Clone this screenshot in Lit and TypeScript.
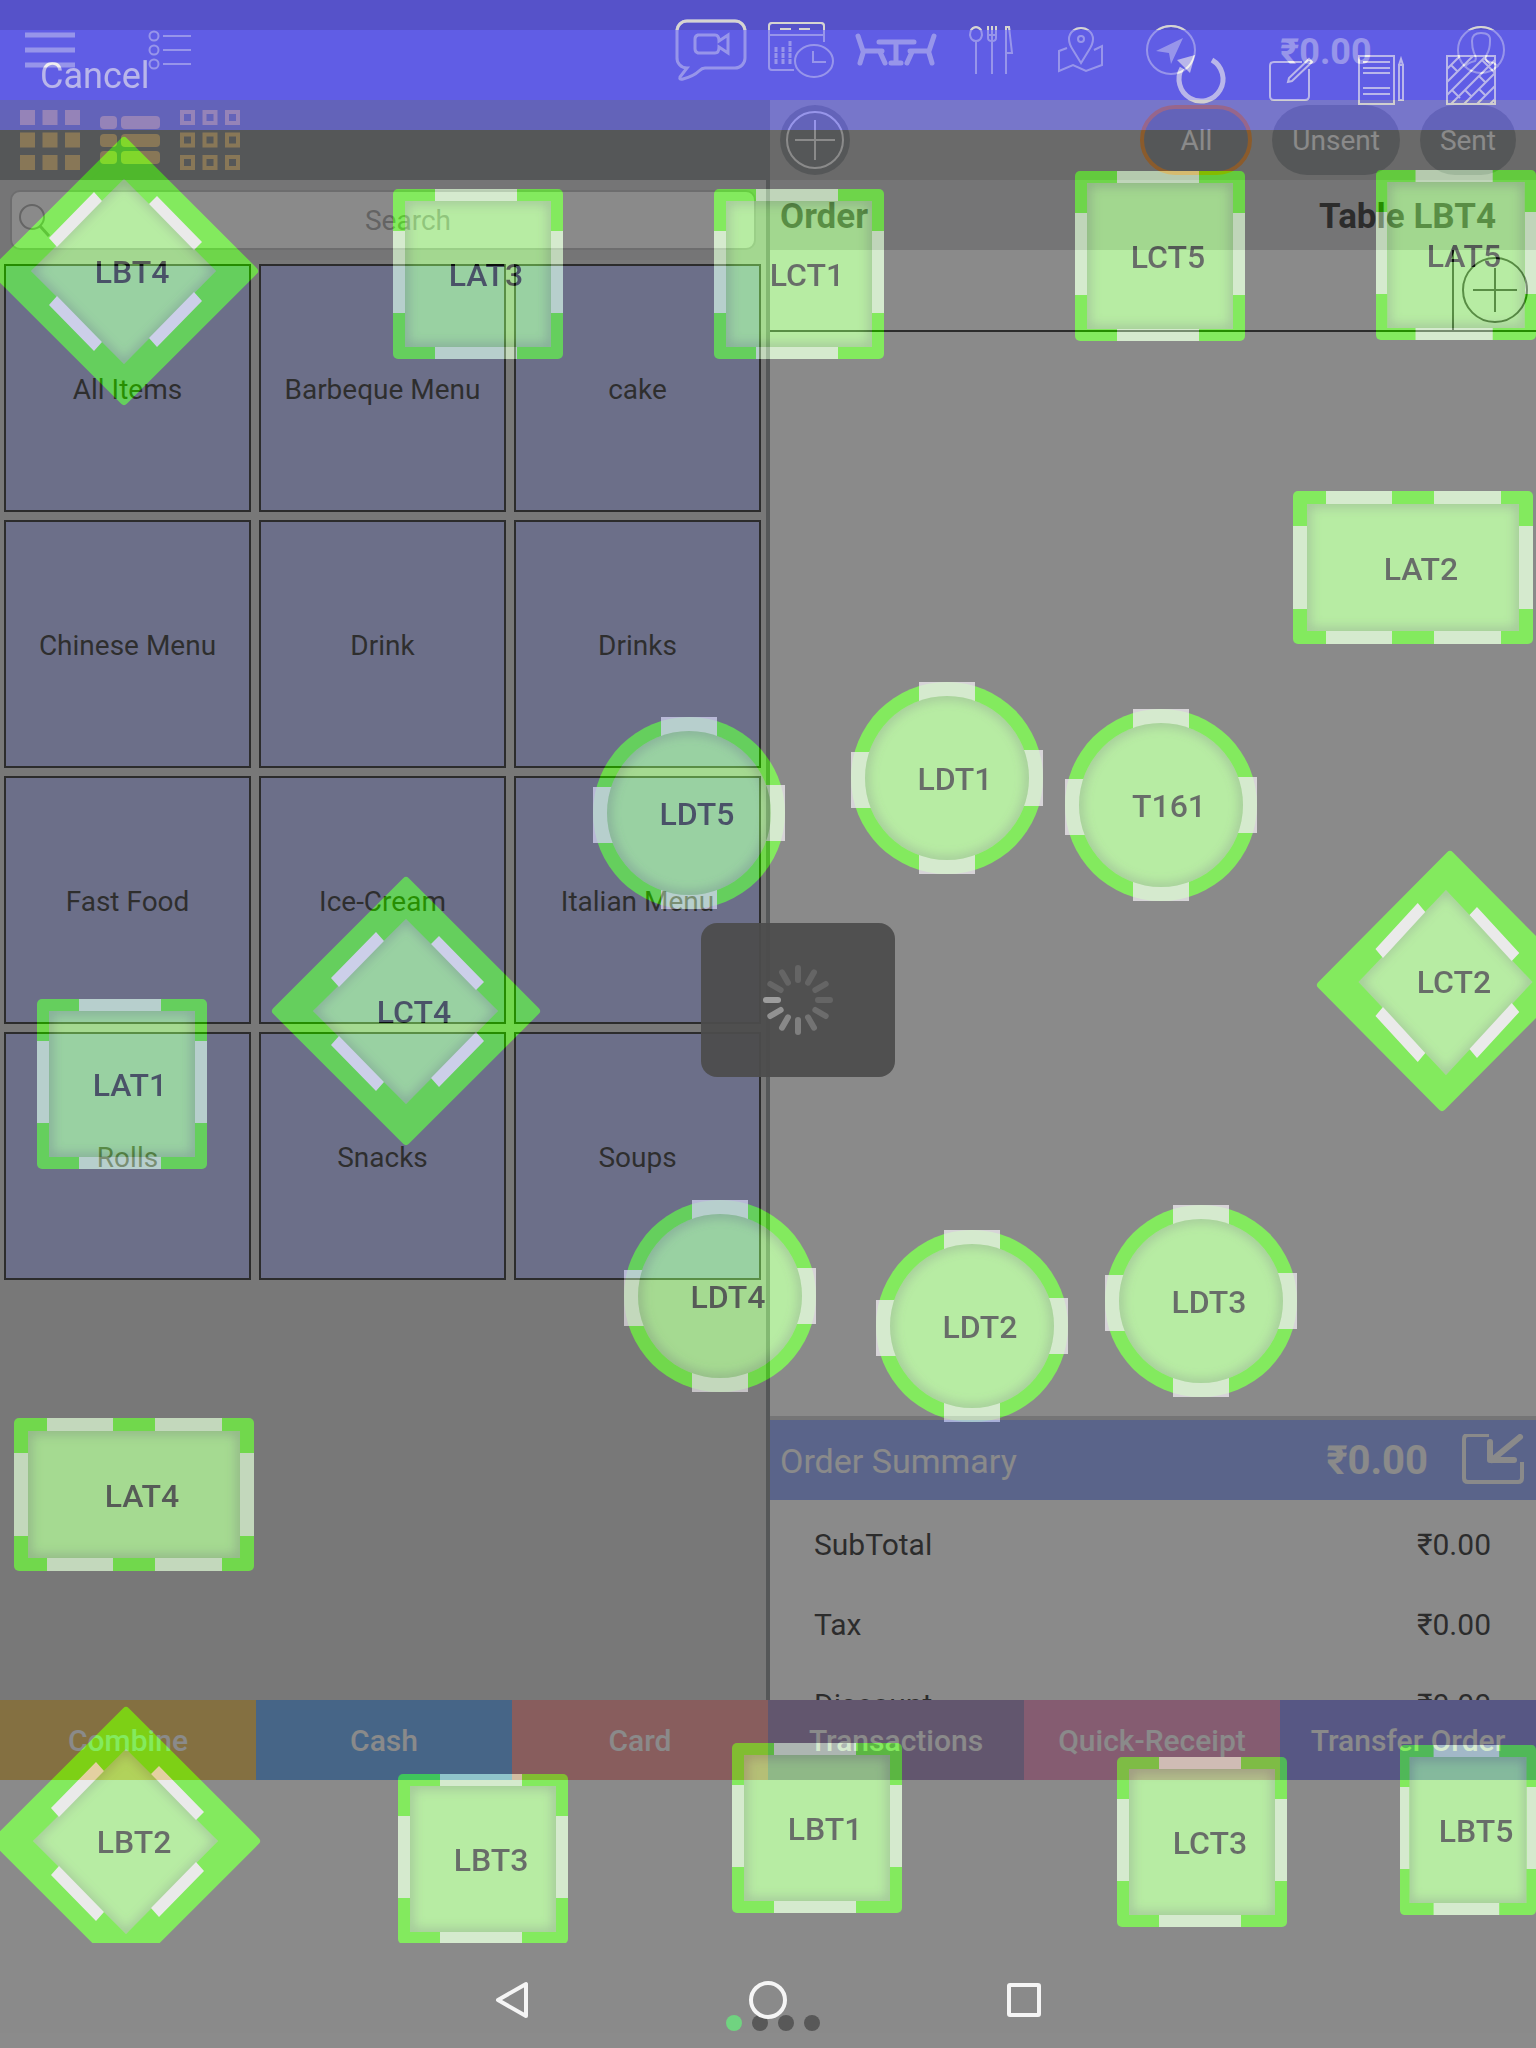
import { LitElement, html, css, svg, nothing } from "lit";
import { customElement, property } from "lit/decorators.js";
import { styleMap } from "lit/directives/style-map.js";

type Kind = "square" | "wide" | "round" | "diamond" | "kite";
interface Spot { label: string; kind: Kind; x: number; y: number; w: number; h: number; }

const SPOTS: Spot[] = [
  { label: "LBT4", kind: "diamond", x: -10, y: 137, w: 268, h: 268 },
  { label: "LAT3", kind: "square", x: 393, y: 189, w: 170, h: 170 },
  { label: "LCT1", kind: "square", x: 714, y: 189, w: 170, h: 170 },
  { label: "LCT5", kind: "square", x: 1075, y: 171, w: 170, h: 170 },
  { label: "LAT5", kind: "square", x: 1376, y: 170, w: 160, h: 170 },
  { label: "LAT2", kind: "wide", x: 1293, y: 491, w: 240, h: 153 },
  { label: "LDT1", kind: "round", x: 851, y: 682, w: 192, h: 192 },
  { label: "T161", kind: "round", x: 1065, y: 709, w: 192, h: 192 },
  { label: "LDT5", kind: "round", x: 593, y: 717, w: 192, h: 192 },
  { label: "LCT2", kind: "kite", x: 1317, y: 851, w: 258, h: 260 },
  { label: "LCT4", kind: "diamond", x: 272, y: 877, w: 268, h: 268 },
  { label: "LAT1", kind: "square", x: 37, y: 999, w: 170, h: 170 },
  { label: "LDT4", kind: "round", x: 624, y: 1200, w: 192, h: 192 },
  { label: "LDT2", kind: "round", x: 876, y: 1230, w: 192, h: 192 },
  { label: "LDT3", kind: "round", x: 1105, y: 1205, w: 192, h: 192 },
  { label: "LAT4", kind: "wide", x: 14, y: 1418, w: 240, h: 153 },
  { label: "LBT2", kind: "diamond", x: -8, y: 1707, w: 268, h: 268 },
  { label: "LBT3", kind: "square", x: 398, y: 1774, w: 170, h: 170 },
  { label: "LBT1", kind: "square", x: 732, y: 1743, w: 170, h: 170 },
  { label: "LCT3", kind: "square", x: 1117, y: 1757, w: 170, h: 170 },
  { label: "LBT5", kind: "square", x: 1400, y: 1745, w: 136, h: 170 },
];

const CATEGORIES = [
  "All Items", "Barbeque Menu", "cake", "Chinese Menu", "Drink", "Drinks",
  "Fast Food", "Ice-Cream", "Italian Menu", "Rolls", "Snacks", "Soups",
];

const ACTIONS = [
  ["Combine", "combine"], ["Cash", "cash"], ["Card", "card"],
  ["Transactions", "transactions"], ["Quick-Receipt", "receipt"], ["Transfer Order", "transfer"],
];

@customElement("floor-table")
export class FloorTable extends LitElement {
  @property() label = "";
  @property() kind: Kind = "square";

  static styles = css`
    :host { display: block; font-family: Roboto, "Liberation Sans", sans-serif; }
    .table {
      display: grid; width: 100%; height: 100%; padding: 0; border: 0; background: none;
      font: inherit; color: #101812; overflow: visible;
    }
    .shape, .name { grid-area: 1 / 1; }
    .shape { width: 100%; height: 100%; overflow: visible; }
    .name {
      position: relative; place-self: center; padding: 2px 0 0 16px;
      font-size: 32px; line-height: 36px; font-weight: 500;
    }
    .rim { fill: #3bdf00; }
    .rim-line { fill: #3bdf00; stroke: #3bdf00; stroke-width: 8; stroke-linejoin: round; }
    .seat { fill: #e5dfe8; fill-opacity: 0.77; }
    .seat-solid { fill: #dedede; }
    .top { fill: #8ee26e; }
    .shade { fill: none; stroke: #4f6b4f; stroke-width: 10; stroke-opacity: 0.55; filter: url(#soft); }
  `;

  private body() {
    const soft = svg`<filter id="soft" x="-20%" y="-20%" width="140%" height="140%"><feGaussianBlur stdDeviation="6" /></filter>`;
    switch (this.kind) {
      case "square":
        return svg`<svg class="shape" viewBox="0 0 170 170" preserveAspectRatio="none" aria-hidden="true">
          <defs>${soft}<clipPath id="in"><rect x="12" y="12" width="146" height="146" /></clipPath></defs>
          <rect class="rim" width="170" height="170" rx="5" />
          <path class="seat" d="M42 0H124V12H42ZM42 158H124V170H42ZM0 42H12V124H0ZM158 42H170V124H158Z" />
          <rect class="top" x="12" y="12" width="146" height="146" />
          <g clip-path="url(#in)"><rect class="shade" x="10" y="10" width="150" height="150" /></g>
        </svg>`;
      case "wide":
        return svg`<svg class="shape" viewBox="0 0 240 153" preserveAspectRatio="none" aria-hidden="true">
          <defs>${soft}<clipPath id="in"><rect x="14" y="13" width="212" height="127" /></clipPath></defs>
          <rect class="rim" width="240" height="153" rx="5" />
          <path class="seat" d="M33 0H99V13H33ZM141 0H208V13H141ZM33 140H99V153H33ZM141 140H208V153H141ZM0 35H14V118H0ZM226 35H240V118H226Z" />
          <rect class="top" x="14" y="13" width="212" height="127" />
          <g clip-path="url(#in)"><rect class="shade" x="12" y="11" width="216" height="131" /></g>
        </svg>`;
      case "round":
        return svg`<svg class="shape" viewBox="0 0 192 192" preserveAspectRatio="none" aria-hidden="true">
          <defs>${soft}<clipPath id="in"><circle cx="96" cy="96" r="82" /></clipPath></defs>
          <circle class="rim" cx="96" cy="96" r="96" />
          <path class="seat" d="M68 0H124V20H68ZM68 172H124V192H68ZM0 70H20V126H0ZM172 68H192V124H172Z" />
          <circle class="top" cx="96" cy="96" r="82" />
          <g clip-path="url(#in)"><circle class="shade" cx="96" cy="96" r="84" /></g>
        </svg>`;
      default: {
        const kite = this.kind === "kite";
        const inner = svg`
          <path class="top" d="M134 42L226 134L134 227L41 134Z" />
          <g clip-path="url(#in)"><path class="shade" d="M134 38L230 134L134 231L37 134Z" /></g>
          <path class="seat-solid" d="M104 55L112 64L67 110L59 101ZM167 59L159 67L204 113L212 105ZM67 159L59 168L104 214L112 205ZM204 155L212 164L167 210L159 201Z" />`;
        return svg`<svg class="shape" viewBox=${kite ? "0 0 258 260" : "0 0 268 268"} preserveAspectRatio="none" aria-hidden="true">
          <defs>${soft}<clipPath id="in"><path d="M134 42L226 134L134 227L41 134Z" /></clipPath></defs>
          <path class="rim-line" d=${kite ? "M133 4L254 126L125 256L4 134Z" : "M134 4L264 134L134 264L4 134Z"} />
          ${kite ? svg`<g transform="translate(3 -3) scale(0.94 1)">${inner}</g>` : inner}
        </svg>`;
      }
    }
  }

  render() {
    return html`<button class="table" type="button">${this.body()}<span class="name">${this.label}</span></button>`;
  }
}

const icon = (x: number, w: number, body: unknown, y = 0, h = 100) =>
  svg`<svg class="icon" width=${w} height=${h} viewBox="${x} ${y} ${w} ${h}" aria-hidden="true">${body}</svg>`;

const ICONS = {
  menu: icon(0, 100, svg`<path d="M25 35H75M25 50H75M25 65H75" stroke-width="5" />`),
  list: icon(100, 110, svg`<circle cx="154" cy="36" r="4.5" /><circle cx="154" cy="50" r="4.5" /><circle cx="154" cy="64" r="4.5" /><path d="M163 36H191M163 50H191M163 64H191" />`),
  video: icon(666, 90, svg`<path stroke-width="3" d="M705 68H735a10 10 0 0 0 10-10V31a10 10 0 0 0-10-10H687a10 10 0 0 0-10 10V57a10 10 0 0 0 10 11L680 77q-1 3 3 2Q694 76 699 71Q702 68 705 68Z" />
    <path stroke-width="3" d="M698 35H715Q719 35 719 41L728 35V53L719 47Q719 53 715 53H698Q695 52 695 49V39Q695 36 698 35Z" />`),
  calendar: icon(756, 90, svg`<path d="M824 42V26q0-3-3-3H772q-3 0-3 3V67q0 3 3 3H794M769 35H824M780 29H791M799 29H810" />
    <path stroke-width="3" stroke-dasharray="5 1" d="M776 47V64M783 47V64M790 41V64" />
    <ellipse cx="814" cy="61" rx="19" ry="16" /><path d="M813 51V62H826" />`),
  seating: icon(846, 100, svg`<path stroke-width="5" stroke-linecap="round" stroke-linejoin="round" d="M858 36L863 51H882M863 53L860 63M880 52L885 63M934 36L929 51H910M929 53L932 63M912 52L907 63M879 42H914M896 42V63M891 63H901" />`),
  cutlery: icon(946, 90, svg`<path d="M976 27Q982 28 982 35Q981 41 976 41Q971 41 970 35Q970 28 976 27ZM976 41V74M988 26V38Q988 41 992 41Q996 41 996 38V26M992 26V74M988 35H996M1006 74V27H1009L1012 53H1006" />`),
  map: icon(1036, 90, svg`<path d="M1081 63L1073 50Q1069 44 1069 39a12 11 0 0 1 24 0Q1093 44 1089 50ZM1067 48L1059 51V71L1073 65L1086 71L1102 65V46L1094 50" /><circle cx="1081" cy="39" r="3" />`),
  locate: icon(1126, 90, svg`<circle cx="1171" cy="50" r="24" /><path class="solid" d="M1156 51L1183 38L1171 64L1169 53Z" />`),
  person: icon(1436, 90, svg`<circle cx="1481" cy="50" r="23" /><path d="M1465 67Q1467 63 1475 61Q1477 58 1474 53Q1472 48 1472 41Q1472 33 1481 33Q1491 33 1490 41Q1490 49 1487 54Q1485 58 1487 61Q1496 63 1498 67" />`),
  refresh: icon(1156, 90, svg`<path stroke-width="5" d="M1212 60A22 22 0 1 1 1182 68" /><path class="solid" d="M1177 60L1195 55L1190 73Z" />`, 30),
  edit: icon(1246, 90, svg`<path d="M1302 62H1274q-4 0-4 4V96q0 4 4 4H1305q4 0 4-4V69M1309 59L1312 62L1292 81L1288 82L1289 78Z" />`, 30),
  notes: icon(1336, 90, svg`<path d="M1359 56H1394V104H1359ZM1363 62H1390M1363 68H1390M1363 73H1390M1363 88H1390M1363 94H1390M1399 65H1403V100H1399ZM1399 65L1401 59L1403 65" />`, 30),
  floor: icon(1426, 90, svg`<path d="M1447 56H1495V104H1447ZM1447 69L1460 56M1447 82L1473 56M1447 95L1486 56M1451 104L1495 60M1464 104L1495 73M1477 104L1495 86M1490 104L1495 99M1451 65L1457 71M1484 58L1490 64M1482 60L1495 73M1463 66L1467 62M1479 76L1485 82M1465 90L1472 97M1452 90L1460 98M1479 89L1486 96" />`, 30),
};

@customElement("app-root")
export class AppRoot extends LitElement {
  static styles = css`
    :host { display: block; font-family: Roboto, "Liberation Sans", sans-serif; font-size: 28px; line-height: 36px; color: #000; }
    * { box-sizing: border-box; }
    button, input { font: inherit; color: inherit; border: 0; padding: 0; background: none; border-radius: 0; }
    .icon { display: block; fill: none; stroke: currentColor; stroke-width: 2; }
    .icon .solid { fill: currentColor; stroke: none; }
    .screen { position: relative; display: flex; flex-direction: column; min-height: 100vh; background: #fff; overflow: hidden; }

    .appbar { display: flex; height: 100px; padding-right: 10px; color: #fff; }
    .appbar.solid-bar { background: linear-gradient(#4e48a6 30px, #6b66f1 30px); }
    .spacer { flex: 1; }
    .price { width: 220px; display: grid; place-items: center; padding-top: 4px; font-size: 36px; font-weight: 700; }

    .workspace { flex: 1 1 0; min-height: 0; display: grid; grid-template-columns: 770fr 766fr; }
    .menu-pane { display: flex; flex-direction: column; min-width: 0; background: #cecece; border-right: 4px solid #717679; }
    .modes { height: 80px; margin-right: -4px; background: #717679; color: #f9cc76; display: flex; align-items: center; gap: 20px; padding-left: 20px; }
    .modes .icon { stroke: none; fill: currentColor; }
    .modes .outline { fill: none; stroke: currentColor; stroke-width: 4; }
    .search { height: 80px; padding: 10px; background: #c7c7ca; }
    .field { display: flex; align-items: center; height: 60px; border: 2px solid #b0b0b2; border-radius: 10px; background: #fff; color: #9a9a9a; }
    .field input { flex: 1; min-width: 0; height: 100%; padding-left: 4px; text-align: center; outline: none; }
    .field input::placeholder { color: #969696; opacity: 1; }
    .tiles { display: grid; grid-template-columns: repeat(3, 1fr); gap: 8px; padding: 4px 5px 0 4px; }
    .tile { height: 248px; padding-top: 4px; border: 2px solid #000; background: #aeb6fc; color: #060606; }

    .order-pane { display: flex; flex-direction: column; min-width: 0; min-height: 0; overflow: hidden; }
    .filters { flex: none; height: 80px; background: #a9a9a9; color: #fff; display: flex; align-items: center; gap: 20px; padding: 0 20px 0 10px; }
    .round { width: 70px; height: 70px; border-radius: 35px; background: #717679; }
    .pill { height: 70px; padding: 2px 20px 0; border-radius: 35px; background: #717679; }
    .pill.on { padding: 2px 36px 0; border: 4px solid #ff8000; }
    .order-head { flex: none; height: 70px; padding: 4px 40px 0 10px; background: #c6c6c9; display: flex; align-items: center; justify-content: space-between; font-size: 35px; font-weight: 700; }
    .guest-row { flex: none; height: 82px; border-bottom: 2px solid #000; display: flex; justify-content: flex-end; }
    .add { width: 84px; border-left: 2px solid #000; display: grid; place-items: center; }
    .lines { flex: 1; border-bottom: 4px solid #c6c6c9; }
    .summary { flex: none; height: 80px; padding: 2px 12px 0 10px; background: #7e99ff; color: #fff; display: flex; align-items: center; font-size: 34px; }
    .summary .total { margin-left: auto; padding-right: 34px; font-size: 40px; font-weight: 700; }
    .totals { flex: none; height: 200px; padding: 5px 45px 0 44px; overflow: hidden; }
    .total-row { height: 80px; display: flex; align-items: center; justify-content: space-between; font-size: 30px; }

    .actions { display: grid; grid-template-columns: repeat(6, 1fr); height: 80px; margin-bottom: 268px; color: #fff; font-size: 30px; font-weight: 500; }
    .actions button { padding-top: 2px; }
    .combine { background: #efb93b; } .cash { background: #469bf7; } .card { background: #f98686; }
    .transactions { background: #9373b4; } .receipt { background: #f183bc; } .transfer { background: #7676ef; }

    .floor { position: absolute; inset: 0; display: flex; flex-direction: column; background: #464646; opacity: 0.627; }
    .floor-bar { height: 130px; padding: 30px 20px 0 40px; background: #5b58df; color: #e8e6e6; display: flex; align-items: center; }
    .cancel { padding-bottom: 8px; font-size: 36px; }
    .canvas { position: absolute; inset: 0 0 105px; overflow: hidden; pointer-events: none; }
    .spot { position: absolute; pointer-events: auto; }

    .glint { position: absolute; inset: 0 0 auto; height: 30px; overflow: hidden; pointer-events: none; }
    .glint .appbar { color: #d6d5d0; }
    .loader { position: absolute; left: 52%; top: 1000px; width: 194px; height: 154px; margin: -77px 0 0 -98px; border-radius: 16px; background: rgba(76, 76, 76, 0.94); display: grid; place-items: center; }
    .loader line { stroke: #fff; stroke-width: 6; stroke-linecap: round; }
    .pager { position: absolute; inset: auto 0 17px 10px; display: flex; justify-content: center; gap: 10px; }
    .dot { width: 16px; height: 16px; border-radius: 8px; background: #585858; }
    .dot.on { background: #70d380; }
    .system { position: absolute; inset: auto 0 0; height: 96px; display: grid; grid-template-columns: repeat(6, 1fr); color: #f5f5f5; }
    .system button { width: 96px; height: 96px; justify-self: end; margin-right: -48px; }
    .system .back { grid-column: 2; } .system .home { grid-column: 3; } .system .recent { grid-column: 4; }
  `;

  private headerIcons(live: boolean) {
    const slot = (name: string, glyph: unknown) =>
      live ? html`<button type="button" aria-label=${name}>${glyph}</button>` : html`<span>${glyph}</span>`;
    return html`
      ${live ? html`${slot("Menu", ICONS.menu)}${slot("List", ICONS.list)}` : nothing}
      <span class="spacer"></span>
      ${slot("Video chat", ICONS.video)} ${slot("Reservations", ICONS.calendar)}
      ${slot("Seating", ICONS.seating)} ${slot("Dining", ICONS.cutlery)}
      ${slot("Map", ICONS.map)} ${slot("Location", ICONS.locate)}
      <span class="price">${live ? "₹0.00" : nothing}</span>
      ${slot("Account", ICONS.person)}`;
  }

  private cells(size: number, inset: number, cls: string) {
    return [0, 1, 2].map((r) => [0, 1, 2].map((c) =>
      svg`<rect class=${cls} x=${c * 22.5 + inset} y=${r * 22.5 + inset} width=${size} height=${size} />`));
  }

  render() {
    const row = (name: string) => html`<div class="total-row"><span>${name}</span><span>₹0.00</span></div>`;
    const levels = [0.12, 0.12, 0.12, 0.12, 0.16, 0.2, 0.27, 0.32, 0.38, 0.44, 0.13, 0.12];
    return html`
      <div class="screen">
        <header class="appbar solid-bar">${this.headerIcons(true)}</header>
        <main class="workspace">
          <section class="menu-pane">
            <div class="modes">
              <button type="button" aria-label="Grid view"><svg class="icon" width="60" height="60" viewBox="0 0 60 60">${this.cells(15, 0, "")}</svg></button>
              <button type="button" aria-label="Detail view"><svg class="icon" width="60" height="60" viewBox="0 0 60 60">
                ${[6, 24, 41].map((y) => svg`<rect x="0" y=${y} width="17" height="13" rx="4" /><rect x="21" y=${y} width="39" height="13" rx="4" />`)}</svg></button>
              <button type="button" aria-label="Outline view"><svg class="icon" width="60" height="60" viewBox="0 0 60 60">${this.cells(11, 2, "outline")}</svg></button>
            </div>
            <div class="search">
              <label class="field">
                <svg class="icon" width="46" height="56" viewBox="0 0 46 56" aria-hidden="true"><circle cx="20" cy="25" r="12" /><path stroke-width="3" d="M28 34L37 44" /></svg>
                <input type="text" placeholder="Search" aria-label="Search" />
              </label>
            </div>
            <div class="tiles">${CATEGORIES.map((c) => html`<button class="tile" type="button">${c}</button>`)}</div>
          </section>
          <section class="order-pane">
            <div class="filters">
              <button class="round" type="button" aria-label="Add">
                <svg class="icon" width="70" height="70" viewBox="0 0 70 70"><circle cx="35" cy="35" r="28" /><path d="M15 35H55M35 15V55" /></svg>
              </button>
              <span class="spacer"></span>
              <button class="pill on" type="button">All</button>
              <button class="pill" type="button">Unsent</button>
              <button class="pill" type="button">Sent</button>
            </div>
            <div class="order-head"><span>Order</span><span>Table LBT4</span></div>
            <div class="guest-row">
              <button class="add" type="button" aria-label="Add guest">
                <svg class="icon" width="66" height="66" viewBox="0 0 66 66"><circle cx="33" cy="33" r="32" /><path d="M11 33H55M33 11V55" /></svg>
              </button>
            </div>
            <div class="lines"></div>
            <div class="summary">
              <span>Order Summary</span><span class="total">₹0.00</span>
              <button type="button" aria-label="Collapse summary">
                <svg class="icon" width="62" height="54" viewBox="0 1 62 54">
                  <path stroke-width="4" d="M27 2H6q-4 0-4 4V45q0 4 4 4H56q4 0 4-4V29" />
                  <path stroke-width="6" stroke-linecap="round" stroke-linejoin="round" d="M58 4L30 27M28 9V27H52" />
                </svg>
              </button>
            </div>
            <div class="totals">${row("SubTotal")}${row("Tax")}${row("Discount")}</div>
          </section>
        </main>
        <nav class="actions">${ACTIONS.map(([name, cls]) => html`<button class=${cls} type="button">${name}</button>`)}</nav>

        <section class="floor" aria-label="Floor plan">
          <div class="floor-bar">
            <button class="cancel" type="button">Cancel</button>
            <span class="spacer"></span>
            <button type="button" aria-label="Refresh">${ICONS.refresh}</button>
            <button type="button" aria-label="Edit">${ICONS.edit}</button>
            <button type="button" aria-label="Notes">${ICONS.notes}</button>
            <button type="button" aria-label="Floor">${ICONS.floor}</button>
          </div>
          <div class="canvas">
            ${SPOTS.map((s) => html`<floor-table class="spot" .label=${s.label} .kind=${s.kind}
              style=${styleMap({ left: `${s.x}px`, top: `${s.y}px`, width: `${s.w}px`, height: `${s.h}px` })}></floor-table>`)}
          </div>
        </section>

        <div class="glint" aria-hidden="true"><div class="appbar">${this.headerIcons(false)}</div></div>
        <div class="loader" role="status" aria-label="Loading">
          <svg width="72" height="72" viewBox="-36 -36 72 72">
            ${levels.map((o, i) => svg`<line x1="0" y1="-20" x2="0" y2="-32" stroke-opacity=${o} transform="rotate(${i * 30})" />`)}
          </svg>
        </div>
        <div class="pager"><span class="dot on"></span><span class="dot"></span><span class="dot"></span><span class="dot"></span></div>
        <nav class="system">
          <button class="back" type="button" aria-label="Back"><svg class="icon" width="96" height="96" viewBox="0 0 96 96"><path stroke-width="4" stroke-linejoin="round" d="M62 32V64L34 48Z" /></svg></button>
          <button class="home" type="button" aria-label="Home"><svg class="icon" width="96" height="96" viewBox="0 0 96 96"><circle cx="48" cy="48" r="17" stroke-width="4" /></svg></button>
          <button class="recent" type="button" aria-label="Recent apps"><svg class="icon" width="96" height="96" viewBox="0 0 96 96"><rect x="33" y="33" width="30" height="30" rx="1" stroke-width="4" /></svg></button>
        </nav>
      </div>`;
  }
}
